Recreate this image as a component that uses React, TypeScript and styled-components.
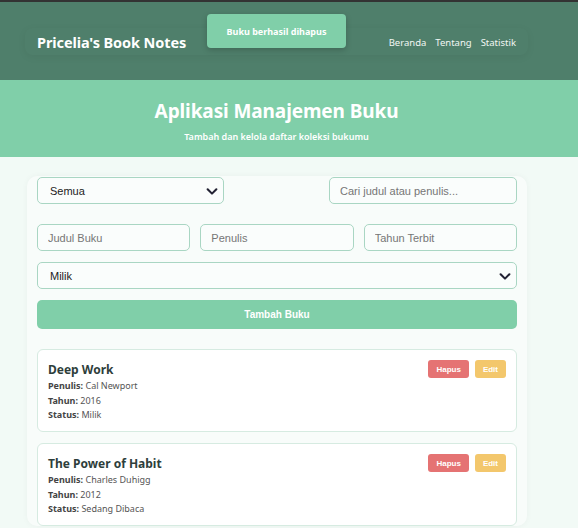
import { FC } from 'react';
import styled, { createGlobalStyle } from 'styled-components';

const GlobalStyle = createGlobalStyle`
  html, body {
    margin: 0;
    padding: 0;
    background: #f2faf6;
    font-family: 'Noto Sans', 'Open Sans', sans-serif;
  }
  * { box-sizing: border-box; }
`;

const Page = styled.div`
  min-height: 528px;
  border-top: 2px solid #333;
  position: relative;
`;

const Header = styled.header`
  height: 78px;
  background: #4f7f6b;
  padding: 26px 50px 0 25px;
`;

const Nav = styled.nav`
  height: 27px;
  display: flex;
  align-items: center;
  justify-content: space-between;
  padding: 0 12px;
  border-radius: 8px;
  box-shadow: 0 2px 8px rgba(0, 0, 0, 0.06);
`;

const Brand = styled.div`
  color: #fff;
  font-weight: 700;
  font-size: 14.5px;
  letter-spacing: -0.1px;
`;

const Links = styled.div`
  display: flex;
  gap: 9px;
  padding-top: 2px;
`;

const NavLink = styled.a`
  color: #f2f7f4;
  font-size: 9.5px;
  text-decoration: none;
`;

const Toast = styled.div`
  position: absolute;
  left: 207px;
  top: 12px;
  width: 139px;
  height: 34px;
  border-radius: 4px;
  background: #80cfa9;
  box-shadow: 0 2px 6px rgba(0, 0, 0, 0.2);
  color: #fff;
  font-size: 9px;
  font-weight: 700;
  display: flex;
  align-items: center;
  justify-content: center;
`;

const Hero = styled.section`
  height: 77px;
  background: #80cfa9;
  color: #fff;
  padding-top: 17px;
`;

const HeroInner = styled.div`
  width: 553px;
  text-align: center;
`;

const HeroTitle = styled.h1`
  margin: 0;
  font-size: 19px;
  letter-spacing: -0.1px;
  font-weight: 700;
  line-height: 28px;
`;

const HeroSub = styled.p`
  margin: 5px 0 0;
  font-size: 9px;
  font-weight: 600;
`;

const Container = styled.main`
  width: 500px;
  margin: 19px 0 0 27px;
  background: #f8fcfa;
  border-radius: 10px;
  box-shadow: 0 0 6px rgba(0, 0, 0, 0.04);
  padding: 1px 10px 0;
`;

const FilterRow = styled.div`
  display: flex;
  justify-content: space-between;
  margin-bottom: 20px;
`;

const fieldBase = `
  height: 27px;
  border: 1px solid #a9d6c3;
  border-radius: 5px;
  background: #fafdfc;
  font-family: 'Liberation Sans', Arial, sans-serif;
  font-size: 11px;
  color: #222;
  outline: none;
`;

const SelectBox = styled.div<{ $width: string }>`
  ${fieldBase}
  width: ${(p) => p.$width};
  display: flex;
  align-items: center;
  justify-content: space-between;
  padding: 0 4px 0 12px;
`;

const Input = styled.input<{ $width?: string }>`
  ${fieldBase}
  width: ${(p) => p.$width || '100%'};
  padding: 0 10px;
  &::placeholder { color: #767676; }
`;

const FormGrid = styled.div`
  display: grid;
  grid-template-columns: repeat(3, 1fr);
  gap: 10px;
  margin-bottom: 11px;
`;

const FormStack = styled.div`
  display: flex;
  flex-direction: column;
  gap: 11px;
`;

const AddButton = styled.button`
  height: 29px;
  border: none;
  border-radius: 5px;
  background: #80cfa9;
  color: #fff;
  font-family: 'Liberation Sans', Arial, sans-serif;
  font-weight: 700;
  font-size: 10px;
`;

const List = styled.div`
  margin-top: 20px;
  display: flex;
  flex-direction: column;
  gap: 11px;
`;

const BookCard = styled.div`
  height: 83px;
  background: #fff;
  border: 1px solid #d6ebe1;
  border-radius: 6px;
  padding: 10px 10px 0;
  display: flex;
  justify-content: space-between;
`;

const BookTitle = styled.h3`
  margin: 0;
  font-size: 12px;
  font-weight: 700;
  color: #2e3e3b;
  line-height: 19px;
`;

const Line = styled.div`
  font-size: 9px;
  line-height: 14.5px;
  color: #555;
  b { color: #444; }
`;

const Actions = styled.div`
  display: flex;
  gap: 6px;
`;

const SmallButton = styled.button<{ $bg: string }>`
  height: 18px;
  border: none;
  border-radius: 3px;
  padding: 0 8px;
  background: ${(p) => p.$bg};
  color: #fff;
  font-family: 'Liberation Sans', Arial, sans-serif;
  font-size: 8px;
  font-weight: 700;
`;

const Chevron: FC = () => (
  <svg width="14" height="14" viewBox="0 0 16 16">
    <path d="M3 6l5 5 5-5" stroke="#223" strokeWidth="2.4" fill="none" strokeLinecap="round" strokeLinejoin="round" />
  </svg>
);

const books = [
  { title: 'Deep Work', author: 'Cal Newport', year: 2016, status: 'Milik' },
  { title: 'The Power of Habit', author: 'Charles Duhigg', year: 2012, status: 'Sedang Dibaca' },
];

const App: FC = () => (
  <Page>
    <GlobalStyle />
    <Header>
      <Nav>
        <Brand>Pricelia's Book Notes</Brand>
        <Links>
          <NavLink>Beranda</NavLink>
          <NavLink>Tentang</NavLink>
          <NavLink>Statistik</NavLink>
        </Links>
      </Nav>
    </Header>
    <Toast>Buku berhasil dihapus</Toast>
    <Hero>
      <HeroInner>
        <HeroTitle>Aplikasi Manajemen Buku</HeroTitle>
        <HeroSub>Tambah dan kelola daftar koleksi bukumu</HeroSub>
      </HeroInner>
    </Hero>
    <Container>
      <FilterRow>
        <SelectBox $width="187px">
          <span>Semua</span>
          <Chevron />
        </SelectBox>
        <Input $width="188px" placeholder="Cari judul atau penulis..." />
      </FilterRow>
      <FormGrid>
        <Input placeholder="Judul Buku" />
        <Input placeholder="Penulis" />
        <Input placeholder="Tahun Terbit" />
      </FormGrid>
      <FormStack>
        <SelectBox $width="100%">
          <span>Milik</span>
          <Chevron />
        </SelectBox>
        <AddButton>Tambah Buku</AddButton>
      </FormStack>
      <List>
        {books.map((b) => (
          <BookCard key={b.title}>
            <div>
              <BookTitle>{b.title}</BookTitle>
              <Line><b>Penulis:</b> {b.author}</Line>
              <Line><b>Tahun:</b> {b.year}</Line>
              <Line><b>Status:</b> {b.status}</Line>
            </div>
            <Actions>
              <SmallButton $bg="#e57373">Hapus</SmallButton>
              <SmallButton $bg="#f3c76c">Edit</SmallButton>
            </Actions>
          </BookCard>
        ))}
      </List>
    </Container>
  </Page>
);

export default App;
